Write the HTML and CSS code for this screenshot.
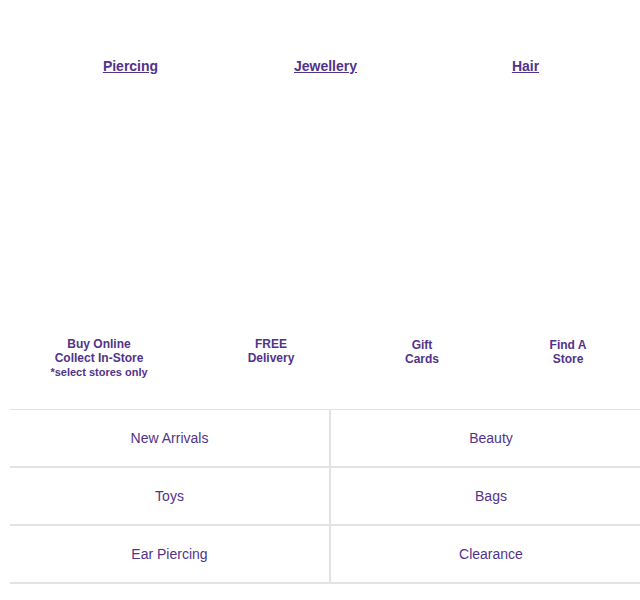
FILE: index.html
```html
<!DOCTYPE html>
<html>
<head>
	<title>Shop</title>
	<link rel="stylesheet" href="styles.css">
</head>
<body>
	<div class="categories">
		<div class="category"><a href="#">Piercing</a></div>
		<div class="category"><a href="#">Jewellery</a></div>
		<div class="category"><a href="#">Hair</a></div>
	</div>
	<div class="features">
		<div class="feature">Buy Online<br>Collect In-Store<br><span class="small">*select stores only</span></div>
		<div class="feature">FREE<br>Delivery</div>
		<div class="feature lower">Gift<br>Cards</div>
		<div class="feature lower">Find A<br>Store</div>
	</div>
	<div class="menu-grid">
		<div class="menu-item left">New Arrivals</div>
		<div class="menu-item">Beauty</div>
		<div class="menu-item left">Toys</div>
		<div class="menu-item">Bags</div>
		<div class="menu-item left">Ear Piercing</div>
		<div class="menu-item">Clearance</div>
	</div>
</body>
</html>
```

FILE: styles.css
```css
body{
	margin: 0;
	background: white;
	font-family: "Liberation Sans", Arial, sans-serif;
	color: #51338b;
	overflow: hidden;
}
.categories{
	box-sizing: border-box;
	height: 336px;
	padding-top: 58px;
	padding-left: 33px;
	display: grid;
	grid-template-columns: 195px 195px 205px;
	align-items: start;
}
.category{
	text-align: center;
	font-size: 14px;
	font-weight: bold;
	line-height: 16px;
}
.category a{
	color: #51338b;
	text-decoration: underline;
}
.features{
	box-sizing: border-box;
	height: 73px;
	padding-top: 1px;
	padding-left: 11px;
	display: grid;
	grid-template-columns: 176px 168px 134px 158px;
	align-items: start;
}
.feature{
	text-align: center;
	font-size: 12px;
	font-weight: bold;
	line-height: 14px;
}
.feature.lower{
	margin-top: 1px;
}
.feature .small{
	font-size: 11px;
	line-height: 14px;
}
.menu-grid{
	width: 641px;
	margin-left: 10px;
	display: grid;
	grid-template-columns: 321px 320px;
	border-top: 1px solid #e3e3e3;
}
.menu-item{
	box-sizing: border-box;
	height: 58px;
	border-bottom: 2px solid #e3e3e3;
	display: flex;
	align-items: center;
	justify-content: center;
	font-size: 14px;
}
.menu-item.left{
	border-right: 2px solid #e3e3e3;
}
```
